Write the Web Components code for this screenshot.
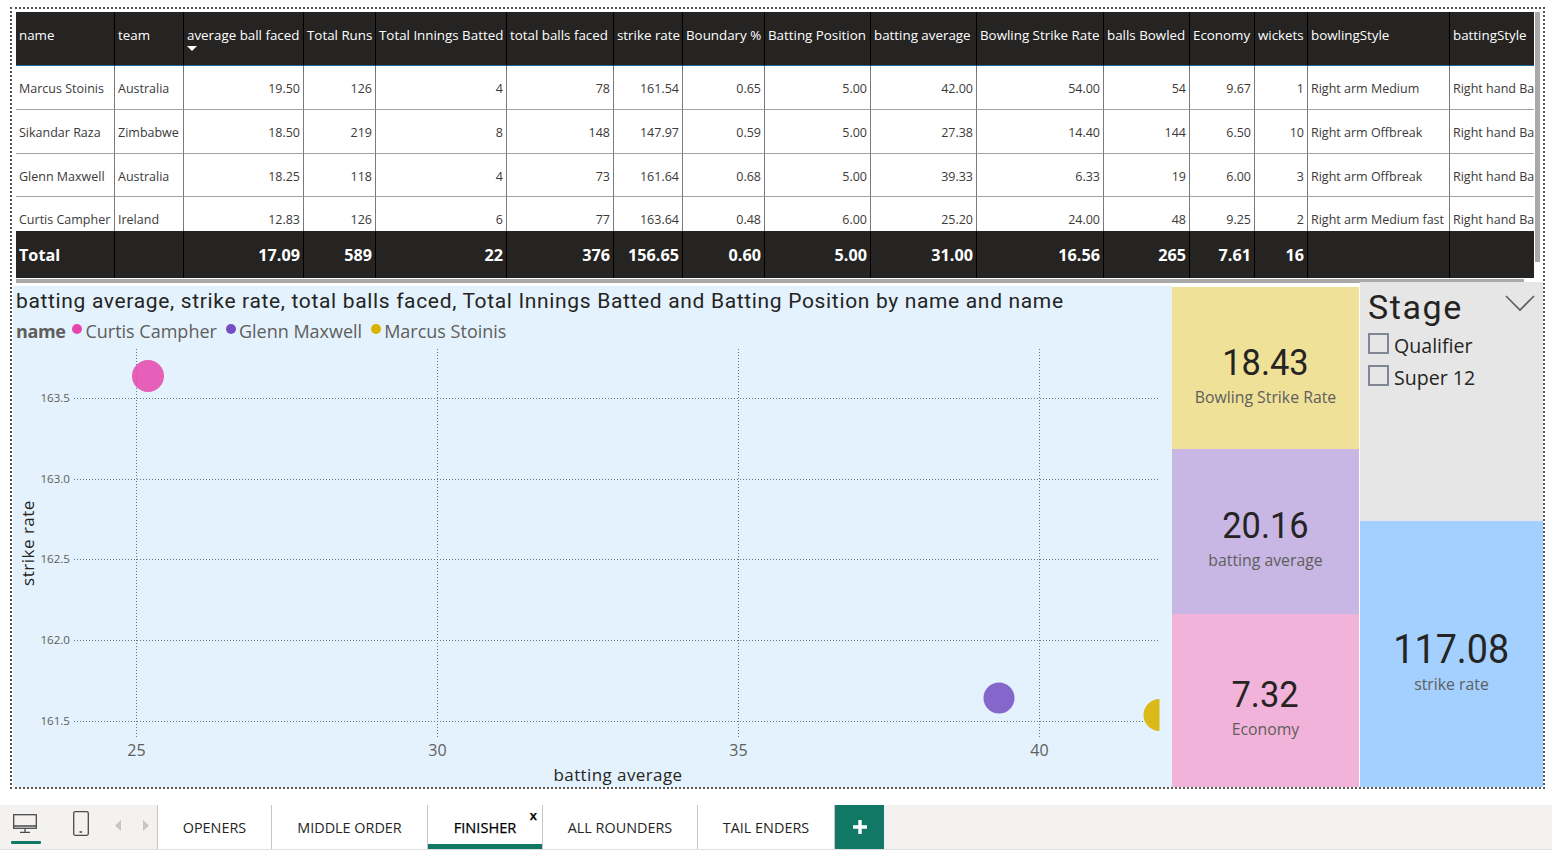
<!DOCTYPE html>
<html>
<head>
<meta charset="utf-8">
<title>Finisher</title>
<style>
  html, body { margin: 0; height: 100%; background: #fff; overflow: hidden; }
  body { font-family: "Open Sans", "Noto Sans", sans-serif; }
  #page { display: flex; flex-direction: column; height: 850px; }
  #canvas {
    box-sizing: border-box;
    width: 1535px;
    height: 782px;
    margin: 7px 0 16px 10px;
    border: 2px dotted #555;
    padding: 3px 0 0 0;
    display: flex;
    flex-direction: column;
  }
  #bottom {
    display: grid;
    grid-template-columns: 1px 1159px 187px 1fr;
    height: 505px;
    margin-top: 0;
  }
  #cards { display: grid; grid-template-rows: 162px 165px 173px; margin-top: 5px; }
  #side { display: grid; grid-template-rows: 239px 1fr; margin-left: 1px; }
</style>
</head>
<body>
<div id="page">
  <div id="canvas">
    <stats-table></stats-table>
    <div id="bottom">
      <span></span>
      <scatter-chart></scatter-chart>
      <div id="cards">
        <kpi-card value="18.43" label="Bowling Strike Rate" color="#f0e199"></kpi-card>
        <kpi-card value="20.16" label="batting average" color="#c8b6e5"></kpi-card>
        <kpi-card value="7.32" label="Economy" color="#f2b3da"></kpi-card>
      </div>
      <div id="side">
        <stage-slicer></stage-slicer>
        <kpi-card value="117.08" label="strike rate" color="#a3d0ff" big></kpi-card>
      </div>
    </div>
  </div>
  <page-tabs></page-tabs>
</div>

<script>
const COLS = [99, 69, 120, 72, 131, 107, 69, 82, 106, 106, 127, 86, 65, 53, 142, 120];
const HEAD = ["name", "team", "average ball faced", "Total Runs", "Total Innings Batted", "total balls faced",
  "strike rate", "Boundary %", "Batting Position", "batting average", "Bowling Strike Rate", "balls Bowled",
  "Economy", "wickets", "bowlingStyle", "battingStyle"];
const ROWS = [
  ["Marcus Stoinis", "Australia", "19.50", "126", "4", "78", "161.54", "0.65", "5.00", "42.00", "54.00", "54", "9.67", "1", "Right arm Medium", "Right hand Bat"],
  ["Sikandar Raza", "Zimbabwe", "18.50", "219", "8", "148", "147.97", "0.59", "5.00", "27.38", "14.40", "144", "6.50", "10", "Right arm Offbreak", "Right hand Bat"],
  ["Glenn Maxwell", "Australia", "18.25", "118", "4", "73", "161.64", "0.68", "5.00", "39.33", "6.33", "19", "6.00", "3", "Right arm Offbreak", "Right hand Bat"],
  ["Curtis Campher", "Ireland", "12.83", "126", "6", "77", "163.64", "0.48", "6.00", "25.20", "24.00", "48", "9.25", "2", "Right arm Medium fast", "Right hand Bat"]
];
const TOTAL = ["Total", "", "17.09", "589", "22", "376", "156.65", "0.60", "5.00", "31.00", "16.56", "265", "7.61", "16", "", ""];
// first two and the style columns are text, the rest line up right
const isLeft = i => i < 2 || i > 13;

class StatsTable extends HTMLElement {
  constructor() {
    super();
    this.attachShadow({ mode: "open" });
    const cells = (row, cls) => row.map((t, i) =>
      `<div class="c ${cls} ${isLeft(i) ? "" : "r"}">${t}</div>`).join("");
    const sort = `<svg class="sort" width="10" height="5" viewBox="0 0 10 5"><path d="M0 0h10L5 5z" fill="#fff"/></svg>`;
    const head = HEAD.map((t, i) =>
      `<div class="c h">${t}${i === 2 ? sort : ""}</div>`).join("");
    this.shadowRoot.innerHTML = `
      <style>
      :host { display: block; position: relative; height: 270px; margin-left: 4px; width: 1527px; flex: none; }
      #clip { width: 1518px; height: 266px; overflow: hidden; }
      #grid {
        display: grid;
        grid-template-columns: ${COLS.map(c => c + "px").join(" ")};
        grid-template-rows: 54px 44px 44px 43px 34px 47px;
        width: max-content;
        font-family: "Open Sans", "Noto Sans", sans-serif;
        font-size: 12.5px;
        color: #3b3a39;
      }
      .c {
        box-sizing: border-box;
        position: relative;
        padding: 2px 3px 0;
        display: flex;
        align-items: center;
        white-space: nowrap;
        overflow: hidden;
        border-right: 1px solid #7a7a7a;
        border-bottom: 1px solid #a0a0a0;
      }
      .r { justify-content: flex-end; }
      .h { background: #252423; color: #fff; font-size: 13.35px; padding: 0 3px 7px; border-right-color: #000; border-bottom: 1px solid #1f6a9a; }
      .last { align-items: flex-end; padding: 0 3px 3px; border-bottom: 0; }
      .t { background: #252423; color: #fff; font-weight: 700; font-size: 16.2px; padding: 0 3px; border-right-color: #000; border-bottom: 0; }
      .sort { position: absolute; left: 3px; top: 34px; }
      .vbar { position: absolute; left: 1519px; top: 0; width: 5px; height: 250px; background: #a9a9a9; }
      .hbar { position: absolute; left: 0; top: 267px; width: 1508px; height: 4px; background: #a9a9a9; }
      </style>
      <div id="clip"><div id="grid">
        ${head}
        ${ROWS.map((r, n) => cells(r, n === 3 ? "last" : "")).join("")}
        ${cells(TOTAL, "t")}
      </div></div>
      <div class="vbar"></div>
      <div class="hbar"></div>`;
  }
}

class ScatterChart extends HTMLElement {
  constructor() {
    super();
    this.attachShadow({ mode: "open" });
    const xs = [[25, 136.5], [30, 437.5], [35, 738.5], [40, 1039.5]];
    const ys = [["163.5", 398.5], ["163.0", 479.5], ["162.5", 559.5], ["162.0", 640.5], ["161.5", 721.5]];
    const grid = "stroke:#6b7680;stroke-width:1;stroke-dasharray:1 2";
    // svg uses page coordinates, so the numbers read the same as on the screenshot
    this.shadowRoot.innerHTML = `
      <style>
      :host { display: flex; flex-direction: column; margin-top: 4px; background: #e3f2fd; height: 501px; overflow: hidden; }
      #title { font: 21px/30px Roboto, sans-serif; letter-spacing: .66px; color: #252423; padding-left: 3px; white-space: nowrap; }
      #legend { display: flex; align-items: center; height: 29px; padding-left: 3px; font: 18px "Open Sans", sans-serif; color: #605e5c; white-space: nowrap; }
      #legend b { margin-right: 7px; letter-spacing: -.4px; }
      #legend i { width: 10px; height: 10px; border-radius: 50%; margin-right: 3px; position: relative; top: -2px; }
      #legend span { margin-right: 9px; }
      svg { display: block; flex: none; }
      text { font-family: "Open Sans", sans-serif; fill: #605e5c; }
      </style>
      <div id="title">batting average, strike rate, total balls faced, Total Innings Batted and Batting Position by name and name</div>
      <div id="legend">
        <b>name</b>
        <i style="background:#e645ab"></i><span>Curtis Campher</span>
        <i style="background:#744ec2"></i><span>Glenn Maxwell</span>
        <i style="background:#d9b300"></i><span>Marcus Stoinis</span>
      </div>
      <svg width="1159" height="442" viewBox="13 345 1159 442">
        <clipPath id="plot"><rect x="74" y="345" width="1085.5" height="400"/></clipPath>
        ${ys.map(([t, y]) => `<line x1="74" x2="1160" y1="${y}" y2="${y}" style="${grid}"/>
          <text x="70" y="${y + 3}" text-anchor="end" font-size="11.6">${t}</text>`).join("")}
        ${xs.map(([t, x]) => `<line x1="${x}" x2="${x}" y1="349" y2="739" style="${grid}"/>
          <text x="${x}" y="756" text-anchor="middle" font-size="16">${t}</text>`).join("")}
        <g clip-path="url(#plot)">
          <circle cx="148" cy="376" r="16" fill="#e645ab" fill-opacity=".85"/>
          <circle cx="999" cy="698" r="15.5" fill="#744ec2" fill-opacity=".85"/>
          <circle cx="1159.5" cy="715" r="16" fill="#d9b300" fill-opacity=".9"/>
        </g>
        <text x="618" y="781" text-anchor="middle" font-size="17" style="fill:#252423;letter-spacing:.4px">batting average</text>
        <text transform="translate(34 543) rotate(-90)" text-anchor="middle" font-size="17" style="fill:#252423;letter-spacing:.5px">strike rate</text>
      </svg>`;
  }
}

const cardTpl = document.createElement("template");
cardTpl.innerHTML = `
  <style>
  :host { display: flex; flex-direction: column; align-items: center; justify-content: center; padding-top: 13px; box-sizing: border-box; min-height: 0; background: var(--bg); }
  #v { font: 37px/44px Roboto, sans-serif; color: #252423; transform: scaleX(.93); }
  :host([big]) #v { font-size: 40.5px; line-height: 46px; }
  #l { font: 15.8px/24px "Open Sans", sans-serif; color: #605e5c; }
  </style>
  <div id="v"></div>
  <div id="l"></div>`;

class KpiCard extends HTMLElement {
  constructor() {
    super();
    this.attachShadow({ mode: "open" }).append(cardTpl.content.cloneNode(true));
  }
  connectedCallback() {
    this.style.setProperty("--bg", this.getAttribute("color"));
    this.shadowRoot.querySelector("#v").textContent = this.getAttribute("value");
    this.shadowRoot.querySelector("#l").textContent = this.getAttribute("label");
  }
}

class StageSlicer extends HTMLElement {
  constructor() {
    super();
    this.attachShadow({ mode: "open" });
    this.shadowRoot.innerHTML = `
      <style>
      :host { display: block; background: #e6e6e6; position: relative; padding: 3px 0 0 8px; box-sizing: border-box; }
      #head { font: 34px/44px Roboto, sans-serif; letter-spacing: 1.6px; color: #252423; height: 44px; }
      svg { position: absolute; left: 144px; top: 12px; }
      .opt { display: flex; align-items: center; height: 32.5px; font: 19.6px "Open Sans", sans-serif; color: #252423; }
      .opt i { box-sizing: border-box; width: 21px; height: 21px; border: 2px solid #7f8793; margin-right: 5px; transform: translateY(-2px); }
      </style>
      <div id="head">Stage</div>
      <svg width="32" height="18" viewBox="0 0 32 18"><path d="M2 2l14 14L30 2" fill="none" stroke="#605e5c" stroke-width="1.6"/></svg>
      <div class="opt"><i></i>Qualifier</div>
      <div class="opt"><i></i>Super 12</div>`;
  }
}

class PageTabs extends HTMLElement {
  constructor() {
    super();
    this.attachShadow({ mode: "open" });
    const tabs = [["OPENERS", 113], ["MIDDLE ORDER", 155], ["FINISHER", 114, true], ["ALL ROUNDERS", 154], ["TAIL ENDERS", 136]];
    this.shadowRoot.innerHTML = `
      <style>
      :host { display: flex; height: 45px; background: #f3f2f1; flex: none; font: 14.4px "Open Sans", sans-serif; color: #252423; box-shadow: inset 0 -1px 0 #e1dfdd; }
      #views { width: 157px; position: relative; flex: none; }
      #views svg { position: absolute; }
      #views u { position: absolute; left: 11px; top: 36px; width: 30px; height: 3px; background: #117865; border-radius: 1px; }
      .tab { box-sizing: border-box; height: 44px; background: #fff; border-left: 1px solid #c8c6c4; position: relative; display: flex; align-items: center; justify-content: center; }
      .on { color: #000; font-size: 14.6px; -webkit-text-stroke: .25px #000; }
      .on::after { content: ""; position: absolute; left: 0; right: 0; bottom: 0; height: 5px; background: #117865; }
      .x { position: absolute; right: 5px; top: 1px; font: 600 13px "Open Sans", sans-serif; }
      #add { width: 49px; height: 44px; border-left: 1px solid #c8c6c4; background: #117865; display: flex; align-items: center; justify-content: center; }
      </style>
      <div id="views">
        <svg style="left:13px;top:9px" width="24" height="20" viewBox="0 0 24 20" fill="none" stroke="#4a4a4a" stroke-width="1.3">
          <rect x=".7" y=".7" width="22.6" height="13.6"/><path d="M.7 12h22.6M12 14.500v3.500M7 18.400h10"/>
        </svg>
        <svg style="left:73px;top:6px" width="16" height="25" viewBox="0 0 16 25" fill="none" stroke="#4a4a4a" stroke-width="1.3">
          <rect x=".7" y=".7" width="14.6" height="23.6" rx="1.5"/><path d="M6.500 21h2.500" stroke-width="1.6"/>
        </svg>
        <u></u>
        <svg style="left:115px;top:15px" width="6" height="11" viewBox="0 0 6 11"><path d="M6 0v11L0 5.500z" fill="#c8c6c4"/></svg>
        <svg style="left:143px;top:15px" width="6" height="11" viewBox="0 0 6 11"><path d="M0 0v11l6-5.500z" fill="#c8c6c4"/></svg>
      </div>
      ${tabs.map(([t, w, on]) => `<div class="tab ${on ? "on" : ""}" style="width:${w + 1}px">${t}${on ? '<span class="x">x</span>' : ""}</div>`).join("")}
      <div id="add"><svg width="14" height="14" viewBox="0 0 14 14"><path d="M7 0v14M0 7h14" stroke="#fff" stroke-width="3.4"/></svg></div>`;
  }
}

customElements.define("stats-table", StatsTable);
customElements.define("scatter-chart", ScatterChart);
customElements.define("kpi-card", KpiCard);
customElements.define("stage-slicer", StageSlicer);
customElements.define("page-tabs", PageTabs);
</script>
</body>
</html>
